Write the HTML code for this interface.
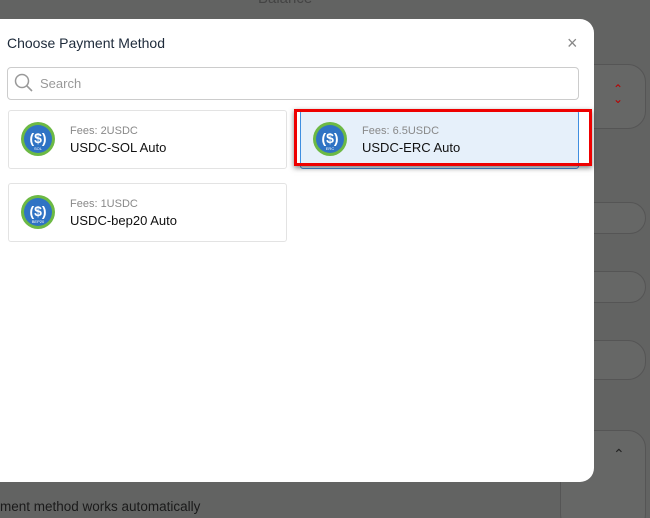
<!DOCTYPE html>
<html style="margin:0;width:650px;height:518px;overflow:hidden;background:#636463"><head><style>
body{margin:0;width:650px;height:518px;background:#636463;position:relative;overflow:hidden;font-family:"Liberation Sans",sans-serif}
.full{position:absolute;left:0;top:0;width:650px;height:518px;background:#626362}
.bg{position:absolute;border:1px solid #555;border-radius:18px;background:#666766}
.modal{position:absolute;left:0;top:19px;width:594px;height:463px;background:#fff;border-radius:0 14px 14px 0}
.title{position:absolute;left:7px;top:35px;font-size:14px;color:#1d2a3a}
.close{position:absolute;left:567px;top:33px;font-size:18px;color:#888}
.search{position:absolute;left:7px;top:67px;width:570px;height:31px;border:1px solid #ccc;border-radius:4px}
.search span{position:absolute;left:32px;top:8px;font-size:13px;color:#999}
.card{position:absolute;width:277px;height:57px;border:1px solid #e3e3e3;border-radius:3px;background:#fff}
.card .fee{position:absolute;left:61px;top:14px;font-size:11px;color:#888}
.card .nm{position:absolute;left:61px;top:29px;font-size:13px;color:#111}
.card svg{position:absolute;left:11px;top:10px}
</style></head><body>
<div class="full"></div>
<div style="position:absolute;left:258px;top:-10px;font-size:15px;color:#444">Balance</div>
<div class="bg" style="left:560px;top:64px;width:84px;height:63px"></div>
<div style="position:absolute;left:613px;top:84px;color:#b00;font-size:12px;line-height:10px">&#8963;<br>&#8964;</div>
<div class="bg" style="left:560px;top:202px;width:84px;height:30px"></div>
<div class="bg" style="left:560px;top:271px;width:84px;height:30px"></div>
<div class="bg" style="left:560px;top:340px;width:84px;height:38px"></div>
<div class="bg" style="left:560px;top:430px;width:84px;height:100px"></div>
<div style="position:absolute;left:613px;top:446px;color:#222;font-size:14px">&#8963;</div>
<div style="position:absolute;left:0;top:499px;font-size:13.5px;color:#1a1a1a">ment method works automatically</div>
<div class="modal"></div>
<div class="title">Choose Payment Method</div>
<div class="close">×</div>
<div class="search"><svg width="20" height="20" style="position:absolute;left:6px;top:5px" viewBox="0 0 20 20"><circle cx="8" cy="8" r="6.5" fill="none" stroke="#999" stroke-width="1.5"/><line x1="12.8" y1="12.8" x2="18" y2="18" stroke="#999" stroke-width="1.6"/></svg><span>Search</span></div>
<div class="card" style="left:8px;top:110px"><svg width="36" height="36" viewBox="0 0 36 36"><circle cx="18" cy="18" r="17" fill="#6cb944"/><circle cx="18" cy="18" r="14" fill="#2f73c4"/><text x="18" y="22" text-anchor="middle" font-size="14" font-weight="bold" fill="#fff" font-family="Liberation Sans">($)</text><text x="18" y="29" text-anchor="middle" font-size="4" fill="#fff" font-family="Liberation Sans">SOL</text></svg><div class="fee">Fees: 2USDC</div><div class="nm">USDC-SOL Auto</div></div>
<div class="card" style="left:300px;top:110px;background:#e6f0fa;border-color:#3f8ee0"><svg width="36" height="36" viewBox="0 0 36 36"><circle cx="18" cy="18" r="17" fill="#6cb944"/><circle cx="18" cy="18" r="14" fill="#2f73c4"/><text x="18" y="22" text-anchor="middle" font-size="14" font-weight="bold" fill="#fff" font-family="Liberation Sans">($)</text><text x="18" y="29" text-anchor="middle" font-size="4" fill="#fff" font-family="Liberation Sans">ERC</text></svg><div class="fee">Fees: 6.5USDC</div><div class="nm">USDC-ERC Auto</div></div>
<div style="position:absolute;left:294px;top:109px;width:292px;height:51px;border:3px solid #e00;box-shadow:0 2px 5px rgba(0,0,0,.5)"></div>
<div class="card" style="left:8px;top:183px"><svg width="36" height="36" viewBox="0 0 36 36"><circle cx="18" cy="18" r="17" fill="#6cb944"/><circle cx="18" cy="18" r="14" fill="#2f73c4"/><text x="18" y="22" text-anchor="middle" font-size="14" font-weight="bold" fill="#fff" font-family="Liberation Sans">($)</text><text x="18" y="29" text-anchor="middle" font-size="4" fill="#fff" font-family="Liberation Sans">BEP20</text></svg><div class="fee">Fees: 1USDC</div><div class="nm">USDC-bep20 Auto</div></div>
</body></html>
